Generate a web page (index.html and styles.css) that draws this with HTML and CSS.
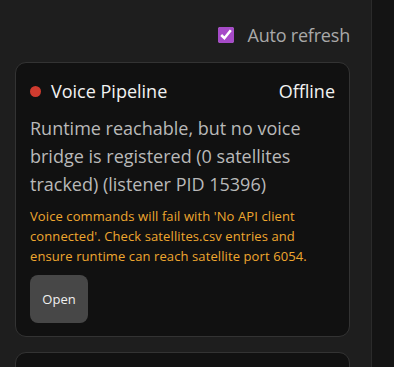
FILE: index.html
```html
<!DOCTYPE html>
<html lang="en">
<head>
    <meta charset="UTF-8">
    <title>Satellites</title>
    <link rel="stylesheet" href="styles.css">
</head>
<body>
    <main class="panel">
        <div class="toolbar">
            <label class="refresh">
                <input type="checkbox" checked>
                <span>Auto refresh</span>
            </label>
        </div>

        <section class="card">
            <div class="card-head">
                <span class="dot"></span>
                <h2>Voice Pipeline</h2>
                <span class="state">Offline</span>
            </div>
            <p class="detail">Runtime reachable, but no voice bridge is registered (0 satellites tracked) (listener PID 15396)</p>
            <p class="warn">Voice commands will fail with 'No API client connected'. Check satellites.csv entries and ensure runtime can reach satellite port 6054.</p>
            <button class="open-btn">Open</button>
        </section>

        <section class="card card-next"></section>
    </main>
    <aside class="side"></aside>
</body>
</html>
```

FILE: styles.css
```css
* {
    margin: 0;
    padding: 0;
    box-sizing: border-box;
}

body {
    font-family: "Open Sans", "Noto Sans", sans-serif;
    background-color: #1e1e1e;
    color: #eee;
    display: flex;
    height: 367px;
    overflow: hidden;
}

.panel {
    width: 372px;
    padding: 22px 21px 0 15px;
    border-right: 1px solid #2b2b2b;
}

.side {
    flex: 1;
    background-color: #141414;
}

.toolbar {
    display: flex;
    justify-content: flex-end;
    height: 40px;
}

.refresh {
    display: flex;
    align-items: center;
    gap: 13px;
    height: 25px;
    font-size: 18px;
    letter-spacing: -0.2px;
    color: #a9a9a9;
}

.refresh input {
    width: 16px;
    height: 16px;
    accent-color: #a64bc8;
    margin: 0;
}

.card {
    background-color: #111;
    border: 1px solid #333;
    border-radius: 11px;
    padding: 13px 14px 13px;
}

.card-head {
    display: flex;
    align-items: center;
    gap: 10px;
    height: 30px;
}

.dot {
    width: 11px;
    height: 11px;
    border-radius: 50%;
    background-color: #cf3b2f;
}

.card-head h2 {
    font-size: 18px;
    font-weight: normal;
    color: #f2f2f2;
    flex: 1;
}

.state {
    font-size: 18px;
    color: #f2f2f2;
}

.detail {
    margin-top: 8px;
    font-size: 18px;
    line-height: 28px;
    color: #b9b9b9;
}

.warn {
    margin-top: 8px;
    font-size: 13px;
    line-height: 20px;
    letter-spacing: 0.1px;
    color: #efa72f;
}

.open-btn {
    margin-top: 9px;
    width: 58px;
    height: 48px;
    border: none;
    border-radius: 8px;
    background-color: #474747;
    color: #f0f0f0;
    font-family: inherit;
    font-size: 13px;
    cursor: pointer;
}

.card-next {
    margin-top: 15px;
    height: 40px;
}
```
